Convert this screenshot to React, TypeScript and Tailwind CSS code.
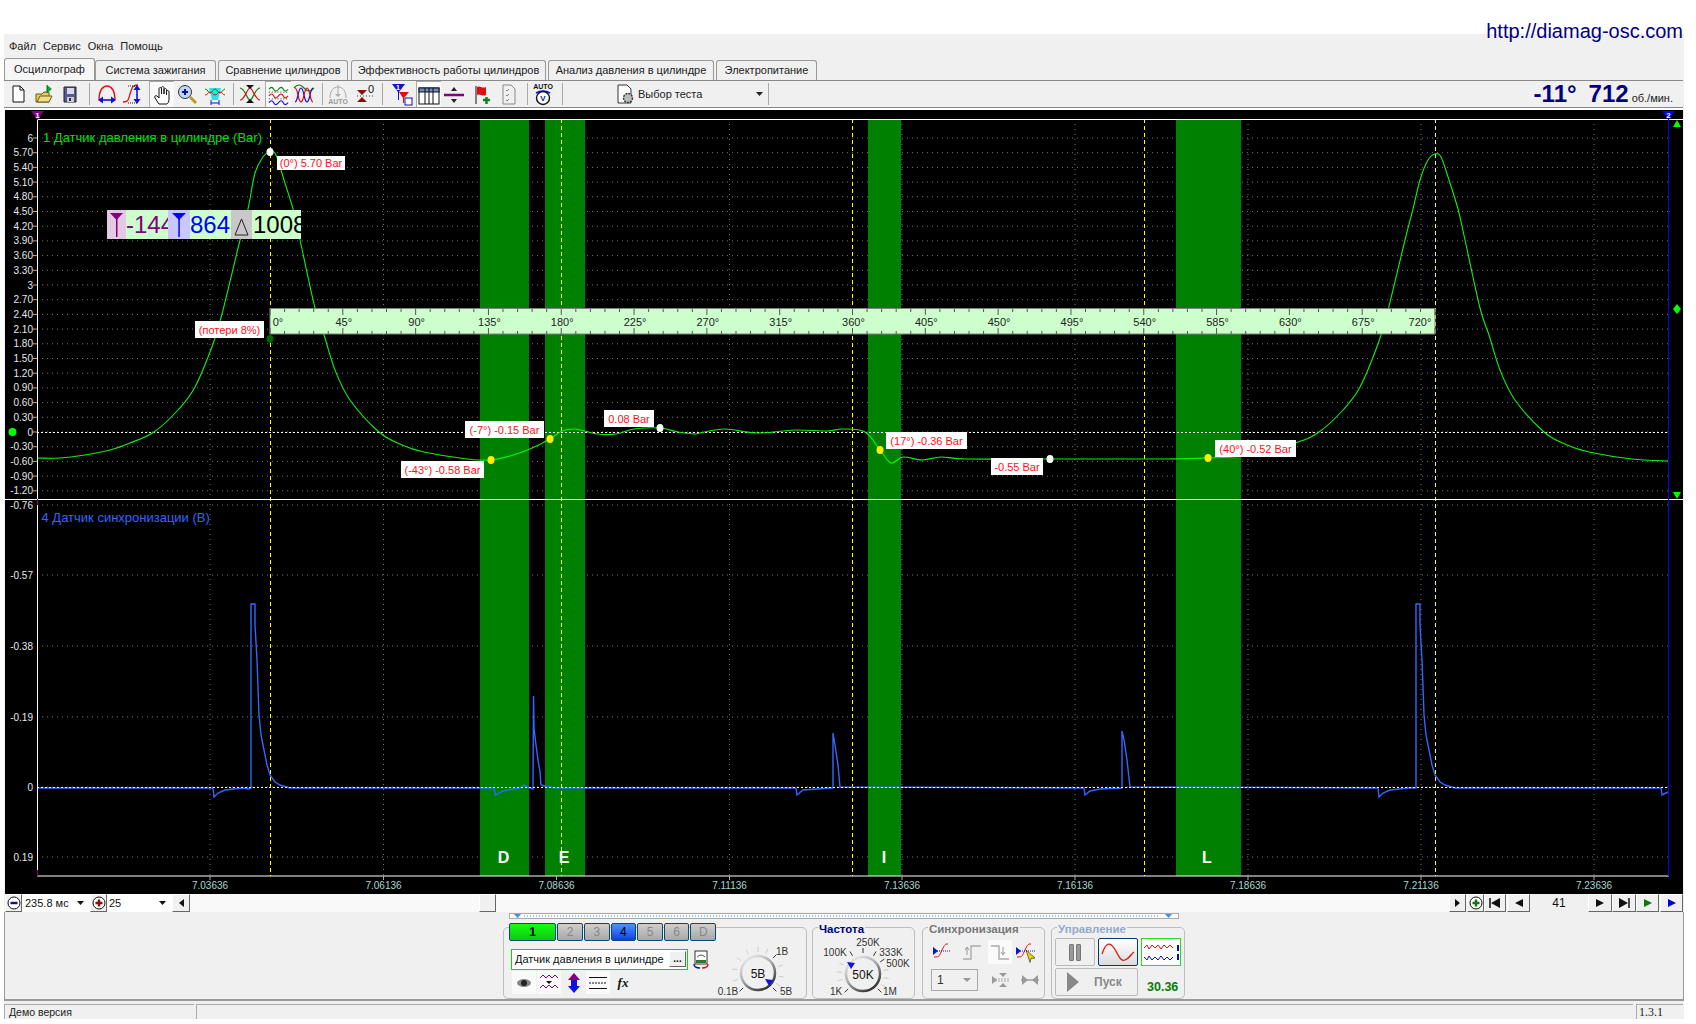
import React from "react";

type P = [number, number];
const FF = "font-['Liberation_Sans',Arial,sans-serif]";
const raised = "border border-t-white border-l-white border-r-[#666] border-b-[#666] bg-[#f0f0f0] flex items-center justify-center shrink-0";

const smooth = (p: P[]) => {
  let d = `M${p[0][0]} ${p[0][1]}`;
  for (let i = 0; i < p.length - 1; i++) {
    const a = p[Math.max(i - 1, 0)], b = p[i], c = p[i + 1], e = p[Math.min(i + 2, p.length - 1)];
    d += ` C${(b[0] + (c[0] - a[0]) / 6).toFixed(1)} ${(b[1] + (c[1] - a[1]) / 6).toFixed(1)} ${(c[0] - (e[0] - b[0]) / 6).toFixed(1)} ${(c[1] - (e[1] - b[1]) / 6).toFixed(1)} ${c[0]} ${c[1]}`;
  }
  return d;
};

const green: P[] = [[37,458],[60,458],[85,455],[110,450],[130,443],[154,432],[178,410],[195,387],[213,344],[222,314],[240,240],[248,209],[255,173],[263,157],[270,152],[276,155],[284,180],[293,209],[300,240],[315,308],[324,335],[335,370],[350,400],[379,432],[402,445],[424,452],[467,459],[491,460],[510,456],[530,449],[550,439],[562,431],[574,429],[585,431],[598,434],[616,434],[634,429],[660,428],[678,432],[694,434],[700,433],[725,429],[757,433],[795,430],[827,431],[843,429],[865,432],[880,450],[891,463],[903,457],[922,460],[941,457],[967,459],[1050,459],[1164,459],[1208,458],[1240,456],[1295,443],[1319,432],[1343,410],[1360,387],[1378,344],[1387,314],[1405,240],[1413,209],[1420,180],[1428,160],[1435,154],[1441,157],[1449,180],[1458,209],[1465,240],[1480,308],[1489,335],[1500,370],[1515,400],[1544,432],[1567,445],[1589,452],[1632,459],[1668,461]];

const blue: P[] = [[37,788],[213,788],[214,797],[218,793],[225,790],[233,789],[243,788],[249,789],[251,788],[251,604],[255,604],[255,625],[257,660],[259,715],[261,735],[263,745],[267,765],[270,775],[275,782],[280,785],[290,788],[494,788],[495.5,795],[503,791],[513,789],[520,788],[524,785],[530,788],[533,789],[533.5,696],[534,728],[536,745],[538,760],[540,772],[541,785],[545,786],[555,788],[796,788],[797,795],[803,790],[830,788],[833,788],[833,733],[835,745],[838,765],[840,787],[1084,788],[1085,795],[1090,791],[1100,789],[1122,788],[1122,731],[1124,740],[1127,760],[1130,787],[1378,788],[1379,797],[1383,793],[1390,790],[1408,788],[1416,788],[1416,604],[1420,604],[1420,625],[1422,660],[1424,715],[1426,735],[1428,745],[1432,765],[1435,775],[1440,782],[1445,785],[1455,788],[1661,788],[1662,795],[1668,792]];

const topTicks: [string, number][] = ["6","5.70","5.40","5.10","4.80","4.50","4.20","3.90","3.60","3.30","3","2.70","2.40","2.10","1.80","1.50","1.20","0.90","0.60","0.30","0","-0.30","-0.60","-0.90","-1.20"].map((t, i) => [t, 138 + i * 14.7]);
const lowTicks: [string, number][] = [["-0.76",505],["-0.57",575],["-0.38",646],["-0.19",717],["0",787],["0.19",857]];
const vGrid = [210,383.5,556.5,729.5,902,1075,1248,1421,1594];
const times = ["7.03636","7.06136","7.08636","7.11136","7.13636","7.16136","7.18636","7.21136","7.23636"];
const bands: [number, number, string, number][] = [[480,49,"D",503.5],[545,40,"E",564],[868,33,"I",884],[1176,65,"L",1207]];
const yellow = [270.5,561.5,852.5,1144.5,1435.5];

const labels: [string, number, number, number][] = [
  ["(0°) 5.70 Bar",277,156,68],["(потери 8%)",195,321,69],["(-43°) -0.58 Bar",401,461,83],["(-7°) -0.15 Bar",465,421,79],
  ["0.08 Bar",604,410,50],["(17°) -0.36 Bar",886,432,81],["-0.55 Bar",991,458,52],["(40°) -0.52 Bar",1215,440,81],
];
const dots: [number, number, string][] = [[270,152,"#fff"],[270,339,"#006400"],[491,460,"#ffee00"],[550,439,"#ffee00"],[880,450,"#ffee00"],[1208,458,"#ffee00"],[660,428,"#fff"],[1050,459,"#fff"]];

function Chart() {
  const rx = (d: number) => 270 + d * (1165 / 720);
  const minor: number[] = [];
  for (let d = 0; d <= 720; d += 9) minor.push(d);
  const rl: number[] = [];
  for (let d = 0; d <= 720; d += 45) rl.push(d);
  return (
    <div className="relative h-[786px] w-[1678px] ml-px border-t-2 border-white bg-black overflow-hidden shrink-0">
      <svg viewBox="5 110 1678 784" width={1678} height={784} className="block" fontFamily="Liberation Sans, Arial, sans-serif">
        {topTicks.map(([t, y]) => (
          <g key={t}>
            <line x1={37} x2={1669} y1={y} y2={y} stroke="#777" strokeDasharray="1 4" />
            <line x1={33} x2={37} y1={y} y2={y} stroke="#aaa" />
            <text x={33} y={y + 3.5} textAnchor="end" fontSize={10} fill="#e8e8e8">{t}</text>
          </g>
        ))}
        {lowTicks.map(([t, y]) => (
          <g key={t}>
            <line x1={37} x2={1669} y1={y} y2={y} stroke="#777" strokeDasharray="1 4" />
            <text x={33} y={y + 3.5} textAnchor="end" fontSize={10} fill="#e8e8e8">{t}</text>
          </g>
        ))}
        {vGrid.map((x) => <line key={x} x1={x} x2={x} y1={119} y2={876} stroke="#777" strokeDasharray="1 4" />)}
        {bands.map(([x, w, n]) => <rect key={n} x={x} y={119} width={w} height={757} fill="#008000" />)}
        {yellow.map((x) => <line key={x} x1={x} x2={x} y1={119} y2={876} stroke="#ffff00" strokeDasharray="4 3" />)}
        <line x1={37} x2={1669} y1={432.5} y2={432.5} stroke="#fff" strokeDasharray="2 2" />
        <path d={smooth(green)} fill="none" stroke="#10f010" strokeWidth={1.1} />
        <polyline points={blue.map((p) => p.join(",")).join(" ")} fill="none" stroke="#3366ff" strokeWidth={1.4} />
        <line x1={37} x2={1669} y1={787.5} y2={787.5} stroke="#fff" strokeDasharray="2 2" />
        <line x1={37} x2={1683} y1={119.5} y2={119.5} stroke="#fff" />
        <line x1={5} x2={1683} y1={499.5} y2={499.5} stroke="#fff" />
        <line x1={37} x2={1669} y1={876} y2={876} stroke="#fff" />
        <line x1={37.5} x2={37.5} y1={119} y2={876} stroke="#fff" />
        <line x1={37.5} x2={37.5} y1={112} y2={119} stroke="#800080" />
        <line x1={37.5} x2={37.5} y1={499} y2={505} stroke="#800080" />
        <line x1={37.5} x2={37.5} y1={870} y2={876} stroke="#800080" />
        <line x1={1668.5} x2={1668.5} y1={111} y2={876} stroke="#0000ff" />
        <polygon points="31,111 44,111 37.5,120" fill="#800080" />
        <text x={37.5} y={118} textAnchor="middle" fontSize={8} fontWeight={700} fill="#fff">1</text>
        <polygon points="1662,111 1675,111 1668.5,120" fill="#0000ff" />
        <text x={1668.5} y={118} textAnchor="middle" fontSize={8} fontWeight={700} fill="#fff">2</text>
        <polygon points="1677,120 1681,127 1673,127" fill="#00ff00" />
        <polygon points="1677,304 1681,309 1677,314 1673,309" fill="#00ff00" />
        <polygon points="1673,492 1681,492 1677,499" fill="#00ff00" />
        <circle cx={12.5} cy={432} r={4} fill="#00ff00" />
        <text x={43} y={141.5} fontSize={13} fill="#00e000">1 Датчик давления в цилиндре (Bar)</text>
        <text x={41.5} y={521.5} fontSize={13} fill="#3366ff">4 Датчик синхронизации (В)</text>
        {bands.map(([, , n, x]) => <text key={n} x={x} y={863} textAnchor="middle" fontSize={16} fontWeight={700} fill="#fff">{n}</text>)}
        {vGrid.map((x, i) => <g key={x}><line x1={x} x2={x} y1={876} y2={880} stroke="#aaa" /><text x={x} y={889} textAnchor="middle" fontSize={10} fill="#a8d8d0">{times[i]}</text></g>)}

        <rect x={270} y={308.5} width={1165} height={25.5} fill="#ccffcc" stroke="#808080" />
        {minor.map((d) => {
          const major = d % 45 === 0;
          return <g key={d}>
            <line x1={rx(d)} x2={rx(d)} y1={309} y2={major ? 315 : 312} stroke="#555" />
            <line x1={rx(d)} x2={rx(d)} y1={major ? 328 : 331} y2={334} stroke="#555" />
          </g>;
        })}
        {rl.map((d) => {
          const x = d === 0 ? 278 : d === 720 ? 1420 : rx(d) + 1;
          return <text key={d} x={x} y={326} textAnchor="middle" fontSize={11} fill="#222">{d}°</text>;
        })}

        {labels.map(([t, x, y, w]) => <g key={t}>
          <rect x={x} y={y} width={w} height={y === 156 ? 14 : 17} fill="#fff" />
          <text x={x + w / 2} y={y + (y === 156 ? 11 : 12.5)} textAnchor="middle" fontSize={11} fill="#ff1020">{t}</text>
        </g>)}
        {dots.map(([x, y, c]) => <ellipse key={`${x}-${y}`} cx={x} cy={y} rx={3.5} ry={4} fill={c} />)}
      </svg>
      <div className="absolute left-[102px] top-[100px] w-[194px] h-[29px] flex overflow-hidden leading-[29px] text-[24px]">
        <div className="w-[19px] bg-[#e4c8e4] flex justify-center shrink-0"><svg width="19" height="29" viewBox="0 0 19 29"><polygon points="3,3 16,3 9.5,10" fill="#800080" /><rect x="9" y="8" width="1.5" height="19" fill="#800080" /></svg></div>
        <div className="w-[42px] bg-[#ccffcc] text-[#800080] shrink-0 overflow-hidden">-144</div>
        <div className="w-[22px] bg-[#c8c8ff] shrink-0"><svg width="22" height="29" viewBox="0 0 22 29"><polygon points="4,3 18,3 11,10" fill="#0000ff" /><rect x="10.3" y="8" width="1.5" height="19" fill="#0000ff" /></svg></div>
        <div className="w-[41px] bg-[#ccffcc] text-[#0000ff] shrink-0 overflow-hidden">864</div>
        <div className="w-[21px] bg-[#c8c8c8] shrink-0"><svg width="21" height="29" viewBox="0 0 21 29"><polygon points="10.5,9 17,25 4,25" fill="none" stroke="#222" /></svg></div>
        <div className="w-[49px] bg-[#ccffcc] text-black shrink-0 overflow-hidden pl-px">1008</div>
      </div>
    </div>
  );
}

const S = ({ children, w = 26, h = 24 }: { children: React.ReactNode; w?: number; h?: number }) => (
  <svg width={w} height={h} viewBox={`0 0 ${w} ${h}`} fontFamily="Liberation Sans, Arial, sans-serif">{children}</svg>
);
const Sep = ({ cls }: { cls: string }) => <div className={`w-px h-[22px] bg-[#aaa] shrink-0 ${cls}`} />;
const Btn = ({ cls = "", pressed, w = "w-[26px]", children }: { cls?: string; pressed?: boolean; w?: string; children: React.ReactNode }) => (
  <div className={`${w} h-[26px] flex items-center justify-center shrink-0 ${pressed ? "bg-[#fafafa] border-t border-l border-[#aaa]" : ""} ${cls}`}>{children}</div>
);

function Toolbar() {
  return (
    <div className="h-[28px] w-[1679px] border-t border-b border-[#888] flex items-center pl-px relative shrink-0">
      <Btn><S><path d="M8 4h7l4 4v12H8z" fill="#fff" stroke="#111" /><path d="M15 4v4h4" fill="none" stroke="#111" /></S></Btn>
      <Btn><S><path d="M5 12h6l2-2h5v10H5z" fill="#e8c860" stroke="#6b5a10" /><path d="M6 20l3-6h12l-3 6z" fill="#f4dc8a" stroke="#6b5a10" /><path d="M16 3l5 4-5 4z" fill="#10a040" /><path d="M16 3v8" stroke="#0a6a20" /></S></Btn>
      <Btn><S><path d="M7 5h12v15H7z" fill="#555a90" stroke="#222" /><rect x="10" y="6" width="7" height="6" fill="#d8d8f0" /><rect x="10" y="15" width="7" height="5" fill="#ccc" /><rect x="12" y="16" width="2" height="3" fill="#333" /></S></Btn>
      <Sep cls="ml-[6px]" />
      <Btn cls="ml-[4px]"><S><path d="M5 18C5 8 9 4 13 4s8 4 8 14" fill="none" stroke="#e01010" strokeWidth="1.4" /><path d="M7 18h12" stroke="#1010e0" strokeWidth="1.6" /><path d="M4 18l5-3.5v7zM22 18l-5-3.5v7z" fill="#1010e0" /></S></Btn>
      <Btn><S><path d="M3 20c5 0 5-1 7-8s3-9 8-9" fill="none" stroke="#e01010" strokeWidth="1.3" /><path d="M8 4h10M8 21h10" stroke="#222" strokeDasharray="1 1" /><path d="M17 7v11" stroke="#1010e0" strokeWidth="1.6" /><path d="M17 3l3.5 5h-7zM17 22l3.5-5h-7z" fill="#1010e0" /></S></Btn>
      <Btn pressed w="w-[25px]" cls="ml-[3px]"><S w={24}><path d="M9 21l-4-6c-1-2 1-3 2-2l2 2V6c0-2 2.500-2 2.500 0v5V5c0-2 2.500-2 2.500 0v6V7c0-2 2.500-2 2.500 0v5-3c0-2 2.500-2 2.500 0v7c0 3-1 4-2 5z" fill="#fff" stroke="#111" /></S></Btn>
      <Btn><S><circle cx="11" cy="10" r="6.5" fill="#bcd8f4" stroke="#333" /><path d="M8 10h6M11 7v6" stroke="#10109a" strokeWidth="2" /><path d="M16 15l6 6" stroke="#c09a20" strokeWidth="3" /></S></Btn>
      <Btn cls="ml-[2px]"><S><path d="M7 6h12l-3 12H10z" fill="#20e8e8" /><path d="M3 7c3 0 3 4 5 4s3-4 5-4 3 4 5 4 3-4 5-4" fill="none" stroke="#108010" /><path d="M3 13c3 0 3-3 5-3s3 3 5 3 3-3 5-3 3 3 5 3" fill="none" stroke="#e01010" /><path d="M9 21h8M9 18v5M17 18v5" stroke="#1010e0" /></S></Btn>
      <Sep cls="ml-[5px]" />
      <Btn cls="ml-[3px]"><S><path d="M3 6c5 0 7 12 10 12s5-12 10-12" fill="none" stroke="#108010" strokeWidth="1.2" /><path d="M3 18c5 0 7-12 10-12s5 12 10 12" fill="none" stroke="#e01010" strokeWidth="1.2" /><path d="M9 3h8l-4 4zM9 21h8l-4-4z" fill="#111" /></S></Btn>
      <Btn pressed cls="ml-[2px]"><S><path d="M3 6q3-4 5 0t5 0 5 0 5 0" fill="none" stroke="#108010" strokeWidth="1.2" /><path d="M3 13q3-4 5 0t5 0 5 0 5 0" fill="none" stroke="#e01010" strokeWidth="1.2" /><path d="M3 20q3-4 5 0t5 0 5 0 5 0" fill="none" stroke="#1010e0" strokeWidth="1.2" /><path d="M3 9h20M3 16h20" stroke="#222" strokeDasharray="1 2" /></S></Btn>
      <Btn><S><path d="M3 6q5-6 10 0t10 0" fill="none" stroke="#108010" strokeWidth="1.2" /><path d="M4 20c3 0 3-14 6-14s3 14 6 14 3-14 6-14" fill="none" stroke="#1010e0" strokeWidth="1.2" /><path d="M4 6c3 0 3 14 6 14s3-14 6-14 3 14 6 14" fill="none" stroke="#e01010" strokeWidth="1.2" /></S></Btn>
      <Sep cls="ml-[5px]" />
      <Btn cls="ml-[2px]"><S><path d="M5 16C5 8 9 5 13 5s8 3 8 11" fill="none" stroke="#aaa" /><path d="M13 3v11" stroke="#aaa" /><path d="M10 12h6l-3 3z" fill="#aaa" /><text x="13" y="22" textAnchor="middle" fontSize="7" fontWeight="700" fill="#999">AUTO</text></S></Btn>
      <Btn><S><path d="M6 8h10l-5 5zM6 20h10l-5-5z" fill="#8a1010" /><path d="M6 14h18" stroke="#333" strokeDasharray="1 2" /><text x="20" y="11" textAnchor="middle" fontSize="11" fill="#111">0</text></S></Btn>
      <Sep cls="ml-[5px]" />
      <Btn cls="ml-[4px]"><S><path d="M5 2h13l-6 8v8H11v-8z" fill="#1010d0" /><path d="M12 10h10l-5 6v5h-1v-5z" fill="#e01010" /><text x="11" y="8" textAnchor="middle" fontSize="7" fontWeight="700" fill="#fff">1</text><rect x="18" y="16" width="7" height="7" fill="#fff" stroke="#1010a0" /></S></Btn>
      <Btn pressed w="w-[25px]" cls="ml-[3px]"><S w={24}><rect x="2" y="5" width="20" height="16" fill="#fff" stroke="#111" /><rect x="2" y="5" width="20" height="4" fill="#6a8ac8" stroke="#111" /><path d="M8 5v16M12 5v16M16 5v16" stroke="#111" /></S></Btn>
      <Btn><S><path d="M3 13h20" stroke="#800080" strokeWidth="2.500" /><path d="M13 5l3 4h-6zM13 21l3-4h-6z" fill="#222" /></S></Btn>
      <Btn cls="ml-[2px]"><S><path d="M7 4v18" stroke="#111" /><path d="M8 5c3-2 5 2 9 0v8c-4 2-6-2-9 0z" fill="#e01010" /><path d="M14 18h7M17.500 15v7" stroke="#0a8020" strokeWidth="2.400" /></S></Btn>
      <Btn cls="ml-px"><S><path d="M7 3h8l4 4v15H7z" fill="#f0f0f0" stroke="#888" /><path d="M10 8l1 1 2-2M10 13l1 1 2-2M10 18l1 1 2-2" stroke="#888" fill="none" /></S></Btn>
      <Sep cls="ml-[5px]" />
      <Btn cls="ml-[2px]"><S><text x="13" y="7" textAnchor="middle" fontSize="7" fontWeight="700" fill="#111">AUTO</text><path d="M6 11q7-4 14 0" fill="none" stroke="#1010e0" strokeWidth="1.600" /><circle cx="13" cy="16" r="6.500" fill="#fff" stroke="#111" strokeWidth="1.400" /><text x="13" y="19" textAnchor="middle" fontSize="8" fontWeight="700" fill="#1010a0">V</text></S></Btn>
      <Sep cls="ml-[6px]" />
      <div className="w-[205px] h-[26px] flex items-center relative shrink-0">
        <div className="ml-[52px]"><S w={22}><path d="M3 3h9l4 4v14H3z" fill="#fff" stroke="#333" /><circle cx="13" cy="16" r="4.500" fill="#bbb" stroke="#333" strokeDasharray="2 1" strokeWidth="1.400" /></S></div>
        <span className="ml-px text-[11px] text-[#222]">Выбор теста</span>
        <svg width="7" height="4" className="absolute left-[193px] top-[11px]"><polygon points="0,0 7,0 3.500,4" fill="#222" /></svg>
      </div>
      <Sep cls="" />
      <div className="ml-auto flex items-baseline text-[#000080] font-bold pr-[10px] h-[26px] leading-[26px]">
        <span className="text-[24px]">-11°</span>
        <span className="text-[24px] ml-[12px]">712</span>
        <span className="text-[11px] font-normal text-[#222] ml-[3px]">об./мин.</span>
      </div>
    </div>
  );
}

const Tri = ({ d, color = "#111" }: { d: "l" | "r"; color?: string }) => (
  <svg width="10" height="10" viewBox="0 0 10 10"><polygon points={d === "r" ? "1,1 9,5 1,9" : "9,1 1,5 9,9"} fill={color} /></svg>
);
const RoundBtn = ({ color, plus }: { color: string; plus?: boolean }) => (
  <svg width="14" height="14" viewBox="0 0 14 14"><circle cx="7" cy="7" r="6" fill="#fff" stroke="#111" /><path d={plus ? "M3.500 7h7M7 3.500v7" : "M3.500 7h7"} stroke={color} strokeWidth="2.400" /></svg>
);

function ScrollRow() {
  return (
    <div className="h-[18px] w-[1679px] pl-px flex text-[11px] text-[#111] items-stretch shrink-0">
      <div className={`${raised} w-[17px]`}><RoundBtn color="#10108a" /></div>
      <div className="w-[68px] bg-white flex items-center justify-between pl-[3px] pr-[6px]"><span>235.8 мс</span><svg width="7" height="4"><polygon points="0,0 7,0 3.500,4" fill="#111" /></svg></div>
      <div className={`${raised} w-[17px]`}><RoundBtn color="#8a1010" plus /></div>
      <div className="w-[65px] bg-white flex items-center justify-between pl-[2px] pr-[6px]"><span>25</span><svg width="7" height="4"><polygon points="0,0 7,0 3.500,4" fill="#111" /></svg></div>
      <div className={`${raised} w-[18px]`}><svg width="5" height="8"><polygon points="5,0 0,4 5,8" fill="#111" /></svg></div>
      <div className="flex-1 bg-[#f9f9f9] flex"><div className={`${raised} w-[17px] ml-[289px]`} /></div>
      <div className={`${raised} w-[17px]`}><svg width="5" height="8"><polygon points="0,0 5,4 0,8" fill="#111" /></svg></div>
      <div className={`${raised} w-[17px] ml-px`}><RoundBtn color="#0a7a0a" plus /></div>
      <div className={`${raised} w-[22px]`}><svg width="12" height="10"><path d="M1 0v10" stroke="#111" strokeWidth="1.500" /><polygon points="11,0 2,5 11,10" fill="#111" /></svg></div>
      <div className={`${raised} w-[23px] ml-px`}><Tri d="l" /></div>
      <div className="w-[58px] text-center text-[12px] leading-[18px]">41</div>
      <div className={`${raised} w-[24px]`}><Tri d="r" /></div>
      <div className={`${raised} w-[24px]`}><svg width="12" height="10"><path d="M11 0v10" stroke="#111" strokeWidth="1.500" /><polygon points="1,0 10,5 1,10" fill="#111" /></svg></div>
      <div className={`${raised} w-[23px]`}><Tri d="r" color="#0a7a0a" /></div>
      <div className={`${raised} w-[23px] ml-px`}><Tri d="r" color="#0000e0" /></div>
    </div>
  );
}

function Knob({ cx, cy, text, ticks, labels: ls, arrow, id }: { cx: number; cy: number; text: string; ticks: [number, boolean][]; labels: [string, number, number][]; arrow: [number, number]; id: string }) {
  return (
    <svg width="103" height="72" viewBox="0 0 103 72" fontFamily="Liberation Sans, Arial, sans-serif" className="block">
      <defs>
        <linearGradient id={id} x1="0.15" y1="0" x2="0.85" y2="1"><stop offset="0" stopColor="#eee" /><stop offset="0.45" stopColor="#aaa" /><stop offset="1" stopColor="#222" /></linearGradient>
      </defs>
      {ticks.map(([a, dark]) => {
        const r = (a * Math.PI) / 180;
        return <line key={a} x1={cx + Math.sin(r) * 21} y1={cy - Math.cos(r) * 21} x2={cx + Math.sin(r) * 26} y2={cy - Math.cos(r) * 26} stroke={dark ? "#333" : "#ccc"} />;
      })}
      <circle cx={cx} cy={cy} r={17} fill="#f0f0f0" stroke={`url(#${id})`} strokeWidth="2.500" />
      <text x={cx} y={cy + 4.500} textAnchor="middle" fontSize="12" fill="#111">{text}</text>
      <polygon points={`${arrow[0] - 4},${arrow[1] - 3} ${arrow[0] + 4},${arrow[1] - 2} ${arrow[0]},${arrow[1] + 4}`} fill="#1010e0" />
      {ls.map(([t, x, y]) => <text key={t} x={x} y={y + 3.500} textAnchor="middle" fontSize="10" fill="#333">{t}</text>)}
    </svg>
  );
}

const Group = ({ title, titleCls, w, children }: { title?: string; titleCls?: string; w: string; children: React.ReactNode }) => (
  <div className={`relative h-[72px] border border-[#bdbdbd] rounded-[5px] shrink-0 ${w}`}>
    {title && <div className={`absolute left-[5px] -top-[6px] px-px bg-[#f0f0f0] text-[11.5px] font-bold leading-[14px] ${titleCls}`}>{title}</div>}
    {children}
  </div>
);

const chan = ["1","2","3","4","5","6","D"];

function Channels() {
  return (
    <div className="flex gap-px -mt-[5px] ml-[5px] relative">
      {chan.map((c, i) => (
        <div key={c} className={`${i === 0 ? "w-[48px] bg-gradient-to-b from-[#10ff10] to-[#10c810] text-black font-bold" : i === 3 ? "w-[26px] bg-gradient-to-b from-[#5090ff] to-[#1040e0] text-black" : "w-[26px] bg-gradient-to-b from-[#cfcfcf] to-[#a8a8a8] text-[#888]"} h-[18px] border border-[#0a4a70] rounded-[2px] text-[12px] leading-[16px] text-center`}>{c}</div>
      ))}
    </div>
  );
}

function Panel() {
  return (
    <div className="h-[89px] w-[1680px] border-l border-r border-b-2 border-[#999] flex flex-col shrink-0">
      <div className="ml-[504px] w-[670px] h-[6px] mt-px border border-[#aaa] bg-[#fafafa] flex items-center justify-between px-[4px]">
        <svg width="660" height="4" viewBox="0 0 660 4"><polygon points="0,0 7,0 3.500,4" fill="#4090e0" /><line x1="10" x2="646" y1="2" y2="2" stroke="#4090e0" strokeDasharray="1 2" /><polygon points="651,0 658,0 654.500,4" fill="#4090e0" /></svg>
      </div>
      <div className="flex mt-[8px] pl-[498px] items-start">
        <Group w="w-[304px]">
          <div className="flex">
            <div className="w-[212px] shrink-0 flex flex-col">
              <Channels />
              <div className="flex items-center mt-[7px] ml-[7px]">
                <div className="w-[177px] h-[21px] border border-[#00e000] bg-white flex items-center text-[11px] text-[#111] pl-[3px] shrink-0">
                  <span className="flex-1 whitespace-nowrap">Датчик давления в цилиндре</span>
                  <div className={`${raised} w-[17px] h-[16px] text-[10px] font-bold leading-[10px] mr-px`}>...</div>
                </div>
                <div className="ml-[2px]"><S w={22} h={22}><rect x="5" y="3" width="12" height="13" fill="#fff" stroke="#333" /><path d="M7 9q4-4 8 0" fill="none" stroke="#555" /><rect x="6" y="12" width="10" height="3" fill="#2a7a2a" /><path d="M4 16c0 3 3 4 6 4" fill="none" stroke="#1010a0" strokeWidth="1.400" /><path d="M18 16c0 3-3 4-6 4" fill="none" stroke="#e01010" strokeWidth="1.400" /></S></div>
              </div>
              <div className="flex mt-px ml-[8px] items-center">
                <div className="w-[24px] h-[23px] bg-[#fafafa] flex items-center justify-center"><svg width="16" height="10"><ellipse cx="8" cy="5" rx="7" ry="4" fill="#888" /><circle cx="8" cy="5" r="3" fill="#222" /></svg></div>
                <div className="w-[24px] h-[23px] bg-[#fafafa] flex items-center justify-center ml-px"><svg width="20" height="18"><path d="M1 4l3-3 3 3 3-3 3 3 3-3 3 3" fill="none" stroke="#800080" /><path d="M1 14l3-3 3 3 3-3 3 3 3-3 3 3" fill="none" stroke="#800080" /><polygon points="7,7 13,7 10,10" fill="#111" /></svg></div>
                <div className="w-[25px] h-[23px] flex items-center justify-center"><svg width="16" height="22"><path d="M8 1l6 7h-3v6H5V8H2z" fill="#800080" /><path d="M8 21l6-7h-3V8H5v6H2z" fill="#1010e0" /></svg></div>
                <div className="w-[24px] h-[23px] bg-[#fafafa] flex items-center justify-center"><svg width="18" height="14"><path d="M0 1.500h18M0 12.500h18" stroke="#111" /><path d="M0 7h18" stroke="#111" strokeDasharray="2 1" /></svg></div>
                <div className="w-[26px] h-[23px] flex items-center justify-center font-['Liberation_Serif',serif] italic font-bold text-[13px] text-[#111]">fx</div>
              </div>
            </div>
            <div className="w-[90px] overflow-hidden">
              <Knob id="k1" cx={42} cy={45} text="5В" arrow={[53, 54]} ticks={[[-135,true],[-108,false],[-81,false],[-54,false],[-27,false],[0,false],[22,false],[45,true],[72,false],[99,false],[120,false],[135,true]]} labels={[["1В",66,23],["0.1В",12,63],["5В",70,63]]} />
            </div>
          </div>
        </Group>
        <Group w="w-[103px] ml-[5px]" title="Частота" titleCls="text-[#000080]">
          <Knob id="k2" cx={50} cy={46} text="50K" arrow={[38, 37]} ticks={[[-135,true],[-105,false],[-85,false],[-65,false],[-30,true],[0,true],[30,true],[55,true],[80,false],[100,false],[120,false],[135,true]]} labels={[["250K",55,14],["100K",22,24],["333K",78,24],["500K",85,35],["1K",23,63],["1M",77,63]]} />
        </Group>
        <Group w="w-[123px] ml-[7px]" title="Синхронизация" titleCls="text-[#777]">
          <div className="flex mt-[12px] ml-[5px]">
            <div className="w-[28px] h-[24px] flex items-center justify-center"><S w={24} h={22}><path d="M4 16c6 0 5-1 8-7s3-6 6-6" fill="none" stroke="#e01010" /><path d="M5 10h16" stroke="#1010e0" strokeDasharray="1 1" /><path d="M3 6l5 4-5 4z" fill="#1010e0" /></S></div>
            <div className="w-[28px] h-[24px] flex items-center justify-center ml-[2px]"><S w={24} h={22}><path d="M3 18h8V5h10" fill="none" stroke="#aaa" strokeWidth="1.400" /><path d="M7 14V7M5 9l2-3 2 3" fill="none" stroke="#999" /></S></div>
            <div className="w-[24px] h-[24px] bg-[#fafafa] flex items-center justify-center ml-[2px]"><S w={24} h={22}><path d="M3 5h8v13h10" fill="none" stroke="#aaa" strokeWidth="1.400" /><path d="M15 6v7M13 11l2 3 2-3" fill="none" stroke="#999" /></S></div>
            <div className="w-[28px] h-[24px] flex items-center justify-center"><S w={24} h={22}><path d="M3 16c6 0 5-1 8-7s3-6 6-6" fill="none" stroke="#e01010" /><path d="M4 10h17" stroke="#1010e0" strokeDasharray="1 1" /><path d="M2 6l5 4-5 4z" fill="#1010e0" /><path d="M12 9l9 8-4 .5-1 4z" fill="#f0d000" stroke="#222" strokeWidth=".6" /></S></div>
          </div>
          <div className="flex mt-[5px] ml-[8px]">
            <div className="w-[47px] h-[22px] border border-[#aaa] flex items-center justify-between pl-[5px] pr-[6px] text-[12px] text-[#333]"><span>1</span><svg width="8" height="4"><polygon points="0,0 8,0 4,4" fill="#999" /></svg></div>
            <div className="w-[26px] h-[22px] flex items-center justify-center ml-[10px]"><S w={22} h={20}><path d="M2 9h18M2 11h18" stroke="#aaa" strokeDasharray="2 1" /><path d="M2 6l5 4-5 4zM9 3h8l-4 4zM9 17h8l-4-4z" fill="#999" /></S></div>
            <div className="w-[28px] h-[22px] flex items-center justify-center ml-[2px]"><S w={22} h={20}><path d="M2 10h18" stroke="#999" strokeWidth="1.400" /><path d="M3 5l6 5-6 5zM19 5l-6 5 6 5z" fill="#999" /></S></div>
          </div>
        </Group>
        <Group w="w-[134px] ml-[6px]" title="Управление" titleCls="text-[#92aacc]">
          <div className="flex flex-col pl-[3px] pt-[10px]">
            <div className="flex gap-[3px]">
              <div className="w-[40px] h-[28px] border border-[#bbb] rounded-[2px] flex items-center justify-center gap-[2px]"><div className="w-[5px] h-[17px] bg-[#999] border border-[#777] rounded-[1px]" /><div className="w-[5px] h-[17px] bg-[#999] border border-[#777] rounded-[1px]" /></div>
              <div className="w-[40px] h-[28px] border border-[#003870] bg-gradient-to-b from-[#fff] to-[#dcdcdc] rounded-[2px] flex items-center justify-center"><svg width="34" height="20"><path d="M1 12C5 0 9 0 13 6s6 14 11 12 6-6 9-8" fill="none" stroke="#e01010" strokeWidth="1.300" /></svg></div>
              <div className="w-[40px] h-[28px] border border-[#20e020] bg-white flex flex-col items-center justify-center"><svg width="36" height="22"><path d="M1 7l3-3 2 4 3-4 3 3 3-3 3 4 3-4 3 3 3-3 3 3" fill="none" stroke="#e01010" /><path d="M1 16l3 3 2-4 3 4 3-3 3 3 3-4 3 4 3-3 3 3 3-3" fill="none" stroke="#1010d0" /><path d="M35 4v6M35 13v6" stroke="#10108a" strokeWidth="2" /></svg></div>
            </div>
            <div className="flex mt-[2px] items-center">
              <div className="w-[83px] h-[28px] border border-[#bbb] rounded-[2px] flex items-center pl-[11px]"><svg width="12" height="20"><polygon points="0,0 12,10 0,20" fill="#888" /></svg><span className="ml-[15px] text-[12px] font-bold text-[#888]">Пуск</span></div>
              <span className="ml-[9px] mt-[10px] text-[12.5px] font-bold text-[#008000]">30.36</span>
            </div>
          </div>
        </Group>
      </div>
    </div>
  );
}

export default function App() {
  return (
    <div className={`w-[1696px] h-[1024px] bg-white overflow-hidden ${FF}`}>
      <div className="h-[34px] flex justify-end items-start pt-[21px] pr-[13px] relative z-10">
        <a className="text-[20px] leading-[21px] text-[#000080] whitespace-nowrap">http://diamag-osc.com</a>
      </div>
      <div className="ml-[4px] w-[1680px] bg-[#f0f0f0] h-[985px] flex flex-col text-[#222]">
        <div className="h-[24px] flex items-center pl-[5px] gap-[7px] text-[11px] text-[#222] shrink-0">
          <span>Файл</span><span>Сервис</span><span>Окна</span><span>Помощь</span>
        </div>
        <div className="h-[22px] flex items-end text-[11px] text-[#222] shrink-0">
          <div className="w-[91px] h-[22px] bg-[#f6f6f6] border-t border-l border-r border-[#999] rounded-t-[3px] text-center leading-[20px]">Осциллограф</div>
          {[["Система зажигания","w-[121px]"],["Сравнение цилиндров","w-[130px] ml-[2px]"],["Эффективность работы цилиндров","w-[195px] ml-[3px]"],["Анализ давления в цилиндре","w-[166px] ml-[2px]"],["Электропитание","w-[101px] ml-[2px]"]].map(([t, c]) => (
            <div key={t} className={`${c} h-[20px] border-t border-l border-r border-[#999] rounded-t-[3px] bg-[#f0f0f0] text-center leading-[18px] whitespace-nowrap`}>{t}</div>
          ))}
        </div>
        <Toolbar />
        <Chart />
        <ScrollRow />
        <Panel />
        <div className="h-[15px] mt-[3px] flex text-[10.5px] text-[#222] w-[1679px] shrink-0">
          <div className="w-[190px] border-t border-l border-[#aaa] pl-[4px] leading-[14px]">Демо версия</div>
          <div className="w-[1437px] ml-[2px] border-t border-l border-[#aaa]" />
          <div className="w-[47px] ml-[3px] border-t border-l border-[#aaa] pl-[2px] leading-[14px] font-['Liberation_Serif',serif] text-[12px]">1.3.1</div>
        </div>
      </div>
    </div>
  );
}
